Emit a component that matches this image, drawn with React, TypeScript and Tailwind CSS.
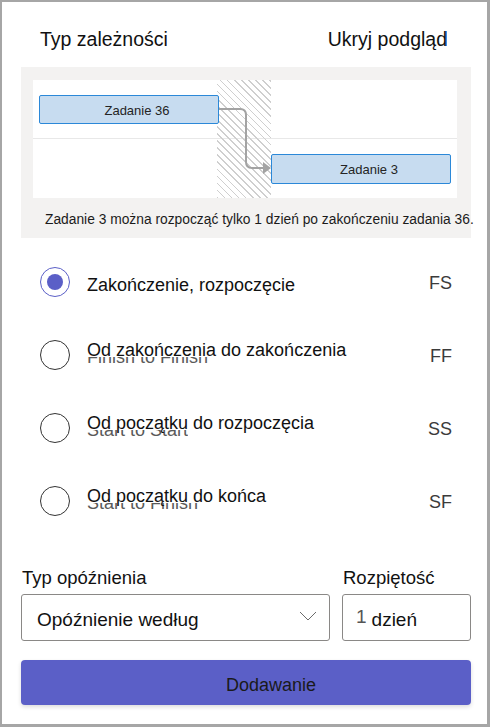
type Row = {
  label: string
  ghost?: string
  code: string
  selected?: boolean
}

const rows: Row[] = [
  { label: 'Zakończenie, rozpoczęcie', code: 'FS', selected: true },
  { label: 'Od zakończenia do zakończenia', ghost: 'Finish to Finish', code: 'FF' },
  { label: 'Od początku do rozpoczęcia', ghost: 'Start to Start', code: 'SS' },
  { label: 'Od początku do końca', ghost: 'Start to Finish', code: 'SF' },
]

function Preview() {
  return (
    <div className="ml-[19px] mt-[16px] h-[171px] w-[450px] bg-[#f3f2f1] pl-[12px] pt-[13px]">
      <div className="relative h-[118px] w-[424px] bg-white">
        {/* hatched lag column */}
        <div className="absolute left-[184px] top-0 h-full w-[54px] bg-[repeating-linear-gradient(45deg,#cfcfcf_0px,#cfcfcf_1.2px,transparent_1.2px,transparent_5px)]" />

        <div className="h-[59px] border-b border-[#e8e8e8] pl-[6px] pt-[15px]">
          <div className="relative flex h-[29px] w-[180px] items-center justify-center rounded-[2px] border border-[#2b88d8] bg-[#c7dcf0] pl-[16px] pt-[2px] text-[13px] text-[#242424]">
            Zadanie 36
          </div>
        </div>
        <div className="h-[59px] pl-[238px] pt-[15px]">
          <div className="relative flex h-[30px] w-[180px] items-center justify-center rounded-[2px] border border-[#2b88d8] bg-[#c7dcf0] pl-[16px] pt-[2px] text-[13px] text-[#242424]">
            Zadanie 3
          </div>
        </div>

        {/* connector */}
        <svg className="absolute left-0 top-0" width="424" height="118" viewBox="0 0 424 118" fill="none">
          <path d="M186 29 H207 Q213 29 213 35 V82 Q213 88 219 88 H231" stroke="#a3a3a3" strokeWidth="2" />
          <path d="M230 82 L238 88 L230 94 Z" fill="#a3a3a3" />
        </svg>
      </div>
      <p className="ml-[12px] mt-[12px] whitespace-nowrap text-[13.8px] leading-[20px] text-[#1b1b1b]">
        Zadanie 3 można rozpocząć tylko 1 dzień po zakończeniu zadania 36.
      </p>
    </div>
  )
}

function Radio({ selected }: { selected?: boolean }) {
  return (
    <span
      className={`flex h-[30px] w-[30px] shrink-0 items-center justify-center rounded-full border-[1.5px] ${
        selected ? 'border-[#5b5fc7]' : 'border-[#333333]'
      }`}
    >
      {selected ? <span className="h-[16px] w-[16px] rounded-full bg-[#5b5fc7]" /> : null}
    </span>
  )
}

export default function App() {
  return (
    <div className="h-[727px] w-[490px] overflow-hidden border-b-[3px] border-l-2 border-r-[3px] border-t-2 border-[#a6a6a6] bg-white font-['Liberation_Sans',Arial,sans-serif] text-[#111111]">
      {/* header */}
      <div className="flex items-center justify-between pl-[38px] pr-[40px] pt-[25px] text-[19.5px] leading-[24px]">
        <span>Typ zależności</span>
        <span className="relative">
          Ukryj podgląd
          <span className="absolute right-0 top-[4px] h-[15px] w-px bg-[#3a8ee6]" />
        </span>
      </div>

      <Preview />

      {/* dependency types */}
      <div className="mt-[7px]">
        {rows.map((row) => (
          <div key={row.code} className="flex h-[73px] items-center pl-[38px] pr-[35px]">
            <Radio selected={row.selected} />
            <div className={`relative ml-[17px] flex-1 ${row.selected ? 'mt-[7px]' : 'mb-[8px]'}`}>
              {row.ghost ? (
                <div className="absolute left-0 top-[19px] h-[6px] overflow-hidden">
                  <div className="-mt-[9px] whitespace-nowrap text-[18px] leading-none text-[#5a5a5a]">{row.ghost}</div>
                </div>
              ) : null}
              <span className="relative text-[18px] leading-[24px]">{row.label}</span>
            </div>
            <span className="mt-[2px] text-[18px] leading-[24px] text-[#3b3b3b]">{row.code}</span>
          </div>
        ))}
      </div>

      {/* lag */}
      <div className="ml-[19px] mt-[29px] w-[450px]">
        <div className="flex gap-[12px]">
          <div className="w-[309px]">
            <div className="pl-[1px] text-[18.5px] leading-[24px]">Typ opóźnienia</div>
            <button
              type="button"
              className="mt-[4px] flex h-[47px] w-full items-center justify-between rounded-[3px] border border-[#8a8886] pl-[15px] pr-[12px] text-left text-[19px]"
            >
              <span className="mt-[6px]">Opóźnienie według</span>
              <svg width="18" height="10" viewBox="0 0 18 10" fill="none" className="-mt-[4px]">
                <path d="M1 1 L9 9 L17 1" stroke="#6b6b6b" strokeWidth="1" />
              </svg>
            </button>
          </div>
          <div className="w-[129px]">
            <div className="pl-[1px] text-[18.5px] leading-[24px]">Rozpiętość</div>
            <div className="mt-[4px] flex h-[47px] items-center rounded-[3px] border border-[#8a8886] pl-[13px] text-[19px]">
              <span className="-mt-[1px] text-[#555555]">1</span>
              <span className="ml-[5px] mt-[6px]">dzień</span>
            </div>
          </div>
        </div>

        <button
          type="button"
          className="mt-[19px] flex h-[45px] w-full items-center justify-center rounded-[4px] bg-[#5b5fc7] pl-[50px] pt-[6px] text-[18px] text-[#1a1a1a] shadow-[0_2px_4px_rgba(0,0,0,0.14)]"
        >
          Dodawanie
        </button>
      </div>
    </div>
  )
}
